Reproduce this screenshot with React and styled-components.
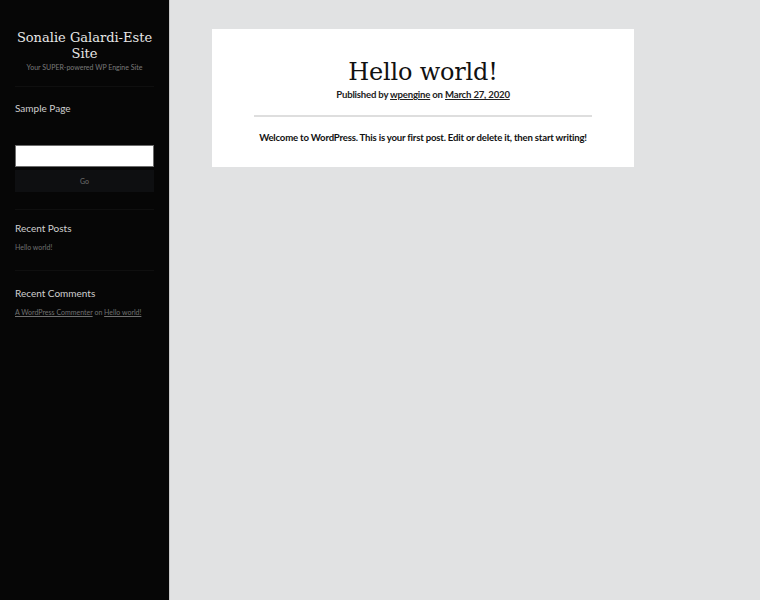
import React from 'react';
import styled, { createGlobalStyle } from 'styled-components';

const GlobalStyle = createGlobalStyle`
  html, body {
    margin: 0;
    padding: 0;
    height: 100%;
  }
  body {
    background: #e1e2e3;
    font-family: Lato, 'Liberation Sans', sans-serif;
  }
  #root {
    height: 100%;
  }
`;

const Page = styled.div`
  display: flex;
  min-height: 600px;
  height: 100%;
`;

const Sidebar = styled.aside`
  width: 170px;
  flex-shrink: 0;
  background: #060606;
  border-right: 1px solid #c9c9c9;
  padding: 30px 15px 0 15px;
  box-sizing: border-box;
`;

const SiteTitle = styled.h1`
  margin: 0;
  font-family: 'DejaVu Serif', serif;
  font-weight: normal;
  font-size: 13px;
  line-height: 16px;
  white-space: nowrap;
  color: #e6e6e6;
  text-align: center;
`;

const Tagline = styled.p`
  margin: 1px 0 0;
  font-size: 7px;
  color: #7a7a7a;
  text-align: center;
`;

const Divider = styled.div`
  height: 1px;
  background: #0f0f0f;
  margin: ${(p) => p.$margin || '18px 0 0'};
`;

const Widget = styled.section`
  padding-top: ${(p) => p.$top || '16px'};
`;

const NavLink = styled.a`
  display: block;
  font-size: 10px;
  color: #cfcfcf;
  text-decoration: none;
`;

const WidgetTitle = styled.h2`
  margin: 0;
  font-size: 10px;
  font-weight: normal;
  color: #d0d0d0;
  line-height: 13px;
`;

const WidgetText = styled.p`
  margin: 7px 0 0;
  font-size: 7px;
  color: #707070;
  line-height: 10px;
`;

const SmallLink = styled.a`
  color: #707070;
  text-decoration: underline;
`;

const SearchInput = styled.input`
  display: block;
  width: 100%;
  height: 22px;
  box-sizing: border-box;
  border: 1px solid #6c6c6c;
  background: #fff;
  margin: 0;
  padding: 0;
`;

const SearchButton = styled.button`
  display: block;
  width: 100%;
  height: 22px;
  margin-top: 3px;
  border: none;
  background: #0e0f11;
  color: #6e6e6e;
  font-family: Lato, sans-serif;
  font-size: 7px;
  padding: 0;
`;

const Main = styled.main`
  flex: 1;
  padding: 29px 126px 0 42px;
`;

const Card = styled.article`
  background: #fff;
  padding: 29px 42px 24px;
  text-align: center;
`;

const PostTitle = styled.h1`
  margin: 0;
  font-family: 'DejaVu Serif', serif;
  font-weight: normal;
  font-size: 24px;
  line-height: 28px;
  color: #111;
  letter-spacing: -0.2px;
`;

const Meta = styled.p`
  margin: 3px 0 0;
  font-size: 9.6px;
  font-weight: bold;
  color: #222;
  letter-spacing: -0.2px;
`;

const MetaLink = styled.a`
  color: #222;
  text-decoration: underline;
`;

const Rule = styled.hr`
  border: none;
  height: 2px;
  background: #dedede;
  margin: 15px 0 0;
`;

const Content = styled.p`
  margin: 15px 0 0;
  font-size: 9.6px;
  font-weight: bold;
  color: #111;
  letter-spacing: -0.2px;
  white-space: nowrap;
`;

export default function App() {
  return (
    <>
      <GlobalStyle />
      <Page>
        <Sidebar>
          <SiteTitle>
            Sonalie Galardi-Este
            <br />
            Site
          </SiteTitle>
          <Tagline>Your SUPER-powered WP Engine Site</Tagline>
          <Divider $margin="15px 0 0" />
          <Widget $top="15px">
            <NavLink href="#">Sample Page</NavLink>
          </Widget>
          <Widget $top="31px">
            <SearchInput type="text" />
            <SearchButton>Go</SearchButton>
          </Widget>
          <Divider $margin="17px 0 0" />
          <Widget $top="12px">
            <WidgetTitle>Recent Posts</WidgetTitle>
            <WidgetText>Hello world!</WidgetText>
          </Widget>
          <Divider $margin="18px 0 0" />
          <Widget $top="16px">
            <WidgetTitle>Recent Comments</WidgetTitle>
            <WidgetText>
              <SmallLink href="#">A WordPress Commenter</SmallLink> on{' '}
              <SmallLink href="#">Hello world!</SmallLink>
            </WidgetText>
          </Widget>
        </Sidebar>
        <Main>
          <Card>
            <PostTitle>Hello world!</PostTitle>
            <Meta>
              Published by <MetaLink href="#">wpengine</MetaLink> on{' '}
              <MetaLink href="#">March 27, 2020</MetaLink>
            </Meta>
            <Rule />
            <Content>
              Welcome to WordPress. This is your first post. Edit or delete it, then start writing!
            </Content>
          </Card>
        </Main>
      </Page>
    </>
  );
}
